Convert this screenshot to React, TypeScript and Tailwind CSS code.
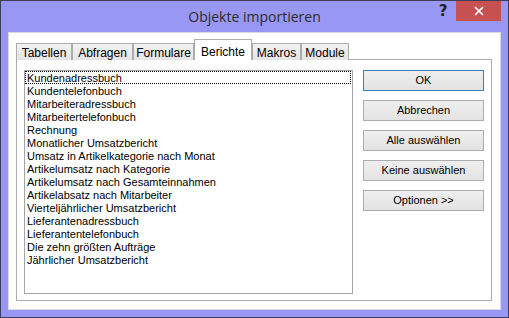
import { X } from "lucide-react";

const tabs = [
  { name: "Tabellen", w: "w-[56px]" },
  { name: "Abfragen", w: "w-[61px]" },
  { name: "Formulare", w: "w-[61px]" },
  { name: "Berichte", w: "w-[58px]", active: true },
  { name: "Makros", w: "w-[49px]" },
  { name: "Module", w: "w-[48px]" },
];

const reports = [
  "Kundenadressbuch",
  "Kundentelefonbuch",
  "Mitarbeiteradressbuch",
  "Mitarbeitertelefonbuch",
  "Rechnung",
  "Monatlicher Umsatzbericht",
  "Umsatz in Artikelkategorie nach Monat",
  "Artikelumsatz nach Kategorie",
  "Artikelumsatz nach Gesamteinnahmen",
  "Artikelabsatz nach Mitarbeiter",
  "Vierteljährlicher Umsatzbericht",
  "Lieferantenadressbuch",
  "Lieferantentelefonbuch",
  "Die zehn größten Aufträge",
  "Jährlicher Umsatzbericht",
];

const buttons = ["OK", "Abbrechen", "Alle auswählen", "Keine auswählen", "Optionen >>"];

export default function App() {
  return (
    <div className="w-[509px] h-[318px] bg-[#9898f4] border border-[#3c3c5c] flex flex-col font-['Liberation_Sans',sans-serif]">
      {/* title bar */}
      <div className="h-[31px] grid grid-cols-[1fr_auto_1fr] shrink-0">
        <div />
        <div className="self-center text-[14px] text-[#2b2b2b] font-['Open_Sans',sans-serif] pb-[1px]">
          Objekte importieren
        </div>
        <div className="flex justify-end items-start pr-[7px]">
          <div className="w-[26px] h-[20px] flex items-center justify-center text-[15px] font-bold text-[#222] font-['DejaVu_Sans',sans-serif]">
            ?
          </div>
          <div className="w-[45px] h-[20px] bg-[#c75050] flex items-center justify-center">
            <X size={14} strokeWidth={3} color="#ffffff" />
          </div>
        </div>
      </div>

      {/* client area */}
      <div className="flex-1 mx-[7px] mb-[7px] bg-white border border-[#d8d8e8] pt-[6px] pl-[7px] pr-[8px] pb-[8px] flex flex-col">
        <div className="flex items-end h-[21px] relative z-10">
          {tabs.map((t) =>
            t.active ? (
              <div
                key={t.name}
                className={`${t.w} h-[21px] bg-white border border-b-0 border-[#acacac] flex items-start justify-center pt-[3px] text-[12px] text-black`}
              >
                {t.name}
              </div>
            ) : (
              <div
                key={t.name}
                className={`${t.w} h-[17px] bg-gradient-to-b from-[#f2f2f2] to-[#e4e4e4] border border-b-0 border-[#acacac] flex items-center justify-center text-[12px] text-black leading-none pt-[2px]`}
              >
                {t.name}
              </div>
            )
          )}
        </div>
        <div className="flex-1 -mt-[1px] border border-[#acacac] bg-white flex pl-[7px] pt-[10px] gap-[10px]">
          <div className="w-[329px] h-[224px] border border-[#a5a5a5] bg-white flex flex-col text-[11px] text-black">
            {reports.map((r, i) => (
              <div
                key={r}
                className={`h-[13px] leading-[13px] pl-[1px] whitespace-nowrap ${
                  i === 0 ? "border border-dotted border-black mr-[1px] leading-[11px]" : "border border-transparent"
                }`}
              >
                {r}
              </div>
            ))}
          </div>
          <div className="w-[121px] flex flex-col gap-[9px]">
            {buttons.map((b, i) => (
              <div
                key={b}
                className={`h-[21px] flex items-center justify-center text-[11px] text-black bg-gradient-to-b from-[#efefef] to-[#e3e3e3] border ${
                  i === 0 ? "border-[#3c7fb1] h-[20px]" : "border-[#acacac]"
                }`}
              >
                {b}
              </div>
            ))}
          </div>
        </div>
      </div>
    </div>
  );
}
